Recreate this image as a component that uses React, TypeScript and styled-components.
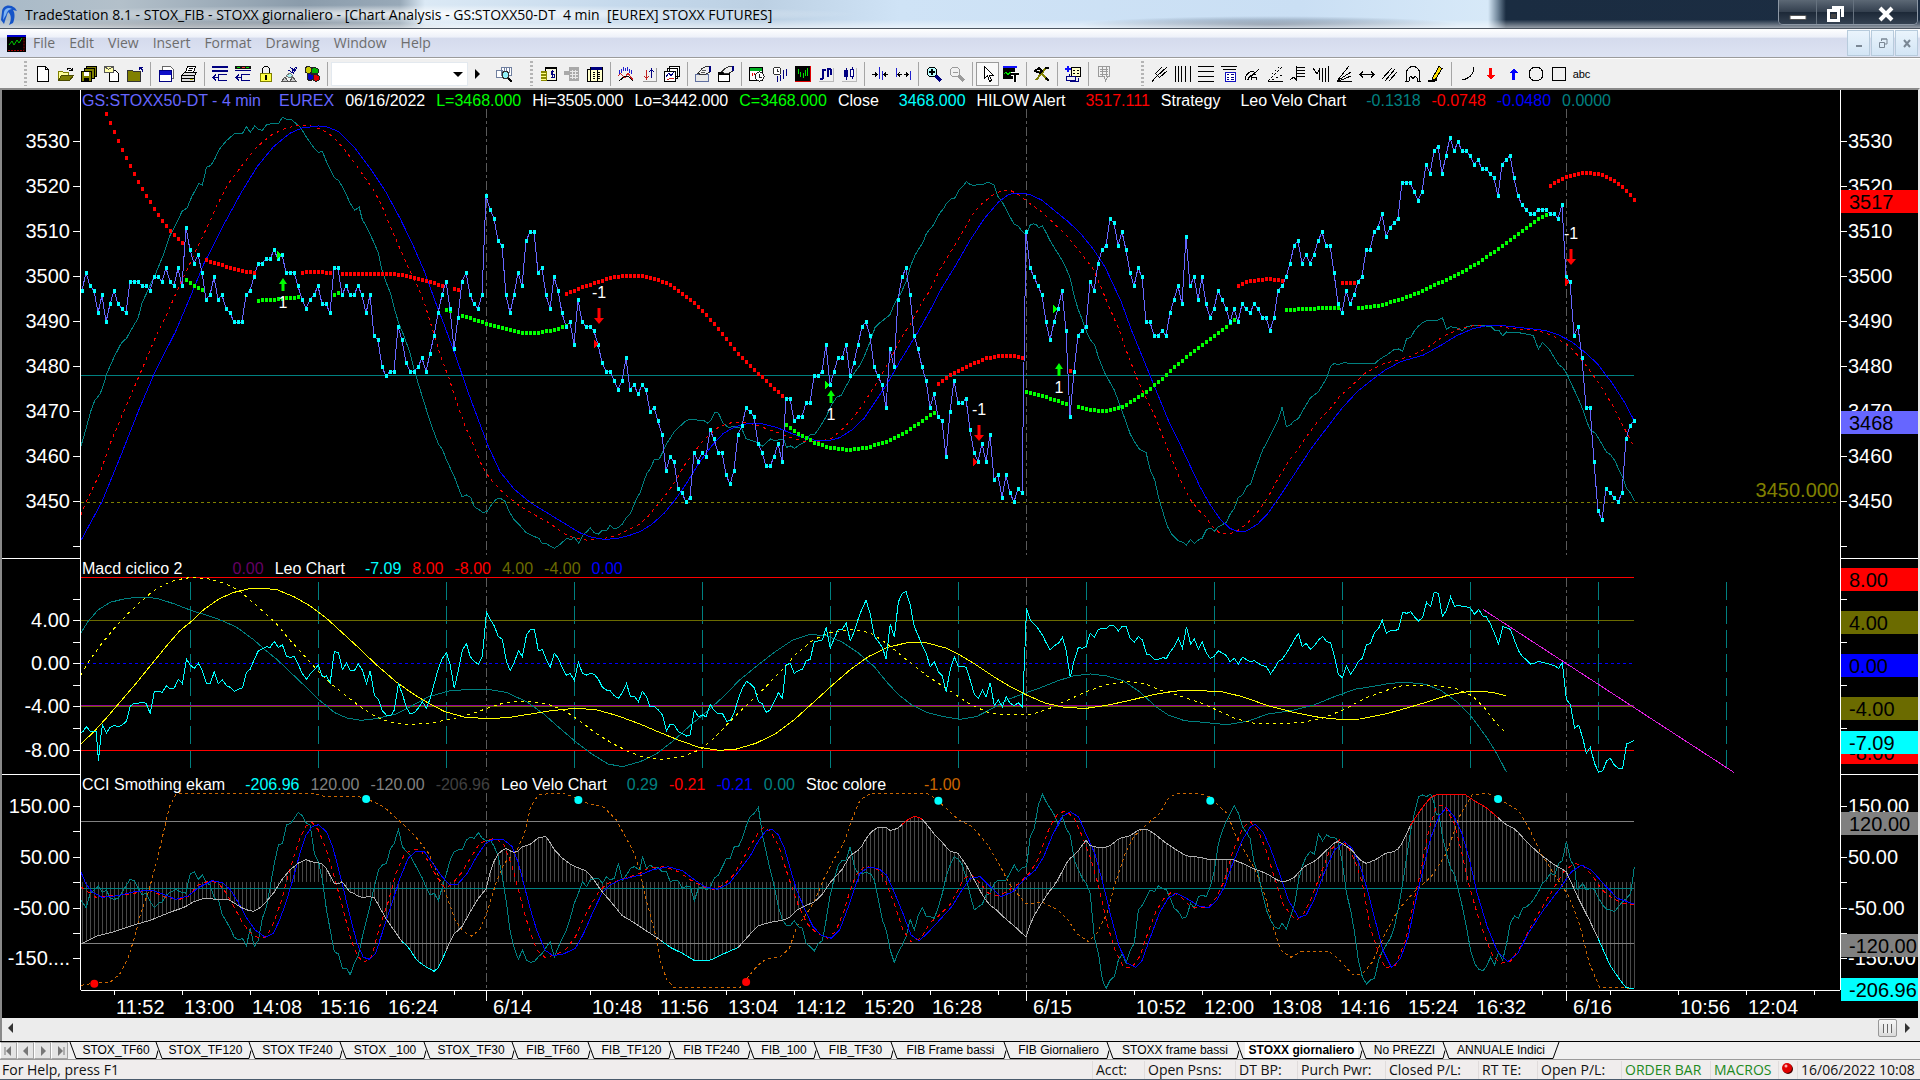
import React from "react";
import styled, { createGlobalStyle } from "styled-components";

const Global = createGlobalStyle`
  html, body { margin: 0; background: #f0f0f0; }
  body { font-family: "Open Sans", "Noto Sans", sans-serif; }
  * { box-sizing: border-box; }
  button, input { font: inherit; color: inherit; }
`;

/* ------------------------------------------------------------------ */
/* Series data                                                         */
/* ------------------------------------------------------------------ */

const PRICES = `
3497 3501 3498 3497 3492 3496 3490 3494 3497 3494 3493 3492 3499 3499 3499 3498 3498 3497 3500 3500
3499 3502 3499 3498 3502 3498 3511 3506 3503 3505 3501 3495 3496 3500 3495 3496 3493 3492 3490 3490
3490 3496 3497 3500 3503 3503 3504 3504 3506 3504 3505 3501 3501 3501 3498 3495 3493 3495 3496 3498
3494 3494 3492 3502 3502 3496 3498 3496 3496 3498 3496 3492 3496 3487 3486 3480 3478 3479 3479 3489
3486 3481 3479 3479 3480 3482 3479 3483 3487 3492 3496 3499 3493 3484 3491 3499 3501 3496 3494 3493
3496 3518 3515 3513 3508 3507 3496 3492 3496 3501 3498 3508 3510 3510 3501 3502 3496 3493 3500 3497
3492 3489 3490 3485 3495 3490 3489 3489 3488 3485 3481 3479 3479 3477 3475 3477 3482 3475 3476 3474
3476 3475 3470 3471 3468 3465 3457 3460 3459 3453 3452 3450 3451 3461 3459 3461 3460 3466 3464 3461
3461 3456 3454 3457 3465 3467 3471 3470 3469 3463 3461 3458 3458 3460 3463 3459 3473 3473 3468 3469
3469 3472 3472 3478 3478 3479 3485 3476 3479 3482 3482 3485 3478 3481 3485 3489 3490 3487 3480 3478
3476 3471 3484 3480 3495 3500 3502 3496 3487 3484 3480 3477 3471 3474 3469 3468 3460 3470 3477 3472
3472 3473 3466 3461 3459 3463 3459 3465 3455 3456 3451 3456 3452 3450 3453 3452 3510 3502 3500 3498
3496 3490 3486 3490 3493 3497 3488 3469 3479 3487 3488 3489 3499 3497 3503 3506 3507 3513 3512 3507
3510 3506 3501 3498 3502 3500 3490 3490 3487 3487 3488 3487 3492 3495 3498 3494 3509 3498 3500 3495
3500 3494 3491 3493 3497 3495 3493 3490 3493 3490 3494 3493 3492 3494 3493 3491 3491 3488 3491 3497
3498 3500 3503 3507 3508 3503 3505 3503 3505 3508 3510 3507 3507 3501 3494 3492 3497 3494 3496 3499
3500 3506 3506 3510 3511 3514 3509 3511 3512 3513 3521 3521 3521 3519 3517 3519 3525 3523 3528 3529
3523 3527 3531 3528 3530 3528 3528 3527 3525 3526 3524 3524 3523 3522 3518 3525 3526 3527 3522 3518
3516 3515 3514 3514 3515 3515 3515 3514 3514 3513 3516 3500 3499 3487 3489 3482 3471 3471 3459 3448
3446 3453 3452 3451 3450 3452 3464 3467 3468`
  .trim().split(/\s+/).map(Number);

type Point = [number, number];
type Sheet = { x: number; step: number; y: number };

// Indicator samples are stored per sheet; each sheet has its own origin and resolution.
const U1: Sheet = { x: 0, step: 2.45, y: 90 };
const U2: Sheet = { x: 560, step: 2.45, y: 90 };
const U3: Sheet = { x: 1120, step: 1.96, y: 90 };
const L1: Sheet = { x: 0, step: 2.45, y: 550 };
const L2: Sheet = { x: 560, step: 2.45, y: 550 };
const L3: Sheet = { x: 1120, step: 1.96, y: 550 };

const read = (s: Sheet, data: string): Point[] => {
  const n = data.trim().split(/[\s,]+/).map(Number);
  const out: Point[] = [];
  for (let i = 0; i < n.length; i += 2) out.push([s.x + n[i] / s.step, s.y + n[i + 1] / 3]);
  return out;
};

const VELO = [
  ...read(U1, `198,1070 210,1020 222,965 232,932 245,912 252,890 262,850 280,800 297,760 310,745 325,712 338,685 348,640 370,580 380,555 400,495 415,440 430,405 447,362 458,355 470,320 487,281 496,285 506,232 517,226 527,205 537,178 555,152 574,131 594,131 604,110 613,127 624,108 633,118 643,121 653,104 672,100 683,99 692,82 702,88 712,87 725,100 738,115 750,140 768,172 780,187 790,184 800,215 819,263 830,272 842,297 858,340 869,361 880,352 888,390 898,410 917,460 927,490 935,535 947,580 957,610 967,660 977,700 987,730 1005,790 1015,840 1027,890 1045,960 1055,1000 1074,1062 1084,1078 1094,1110 1113,1160 1132,1221 1143,1215 1153,1222 1162,1250 1172,1258 1184,1268 1194,1264 1204,1245 1215,1228 1225,1224 1237,1234 1248,1266 1260,1290 1275,1308 1289,1328 1310,1340 1320,1345 1328,1360 1340,1362 1358,1375 1370,1365 1388,1346 1400,1348 1407,1342 1418,1360 1430,1332 1438,1325 1446,1313 1456,1328 1466,1332 1476,1320 1486,1322 1495,1306 1505,1317 1515,1312 1525,1302 1535,1282 1545,1270 1560,1225 1568,1208`),
  ...read(U2, `205,1175 213,1150 222,1135 231,1108 243,1107 252,1085 262,1060 280,1025 300,1002 310,991 325,988 335,990 350,990 362,1000 370,990 380,966 388,970 400,1000 412,1012 425,1010 445,1015 456,1046 470,1052 480,1055 496,1069 505,1058 516,1047 527,1052 540,1048 548,1048 555,1072 565,1068 575,1075 585,1066 600,1055 612,1035 625,1032 640,1005 652,980 665,945 678,922 690,915 700,890 712,865 735,825 745,800 760,755 772,712 785,697 808,675 820,640 835,610 848,575 860,525 870,495 880,475 890,455 898,430 915,405 930,370 940,355 946,342 958,327 967,324 978,300 988,287 996,275 1003,282 1015,287 1023,283 1035,284 1047,277 1055,280 1063,285 1072,318 1085,340 1098,370 1112,402 1122,408 1133,425 1143,435 1152,405 1160,401 1168,405 1172,413 1182,407 1192,430 1202,455 1212,475 1230,510 1240,535 1250,565 1260,620 1270,660 1280,690 1290,725 1300,750 1310,765 1320,805 1335,850 1348,878 1358,900 1370,940 1385,990 1397,1032 1410,1060 1420,1078 1436,1088 1446,1140 1457,1170 1467,1225 1478,1270 1488,1308 1497,1330 1515,1352 1528,1358 1535,1365 1545,1348 1554,1360 1568,1347`),
  ...read(U3, `161,1345 169,1320 177,1314 185,1323 193,1310 208,1298 216,1272 224,1255 232,1222 240,1215 248,1190 256,1182 265,1140 280,1078 287,1060 298,1025 310,990 318,950 326,1010 334,1005 342,992 350,985 357,965 365,945 373,924 389,905 397,885 405,865 413,828 420,820 428,824 440,817 452,822 465,820 480,822 490,819 499,821 507,810 515,802 525,793 538,778 546,777 554,784 562,745 570,743 577,722 585,708 593,698 601,692 609,691 616,692 624,690 632,683 640,718 648,710 660,713 671,722 680,710 690,707 700,706 710,705 718,708 726,708 734,720 742,720 750,737 758,726 768,728 780,727 790,731 800,733 810,737 820,778 828,757 840,775 850,800 860,824 868,833 876,852 884,880 892,905 900,933 908,962 915,995 922,1020 932,1030 942,1055 953,1085 962,1095 970,1112 978,1140 986,1165 993,1195 1000,1208 1008,1232`),
];

const VELO_FAST = [
  ...read(U1, `198,1275 215,1225 245,1150 270,1060 310,945 340,860 380,745 410,670 440,585 460,535 486,465 510,405 530,350 560,280 600,215 630,170 665,135 695,117 725,107 755,106 780,115 805,130 825,152 845,180 880,238 915,300 935,345 960,420 985,490 1005,545 1020,580 1040,640 1060,720 1080,800 1100,865 1120,940 1140,1010 1160,1065 1180,1125 1200,1165 1230,1205 1270,1245 1310,1275 1350,1302 1380,1330 1410,1345 1440,1351 1480,1345 1510,1338 1535,1322 1568,1302`),
  ...read(U2, `215,1280 235,1250 265,1205 285,1170 305,1125 330,1085 345,1060 370,1030 390,1010 420,998 440,997 465,1000 485,1007 515,1020 545,1033 570,1045 600,1055 635,1055 665,1045 690,1020 715,988 740,948 765,900 790,850 815,795 835,745 860,700 885,640 905,605 930,540 960,480 985,430 1010,375 1030,345 1060,315 1080,303 1105,302 1125,315 1150,340 1180,365 1210,400 1240,435 1270,480 1305,535 1325,590 1345,650 1370,720 1390,790 1415,870 1440,935 1460,985 1475,1035 1495,1095 1520,1170 1545,1230 1568,1265`),
  ...read(U3, `165,1275 180,1308 195,1328 210,1333 228,1325 250,1300 270,1265 290,1222 310,1165 330,1115 350,1075 370,1030 390,990 410,960 430,920 450,893 480,850 515,822 545,810 570,798 600,775 635,738 665,717 690,708 720,706 745,708 760,714 790,718 820,722 850,738 880,768 900,800 925,850 945,895 965,945 985,1005 1007,1068`),
];

const VELO_SLOW = [
  ...read(U1, `198,1352 250,1235 300,1085 340,960 380,845 430,725 470,610 500,520 550,400 590,310 630,230 670,170 710,130 740,114 780,108 800,110 830,125 870,175 910,240 945,305 980,385 1010,460 1040,545 1065,630 1090,710 1120,810 1145,900 1175,1000 1195,1065 1225,1145 1260,1198 1300,1238 1340,1268 1380,1298 1420,1328 1450,1342 1480,1348 1510,1346 1540,1337 1568,1325`),
  ...read(U2, `225,1303 255,1270 285,1225 310,1180 340,1120 370,1070 400,1030 430,1010 465,999 495,1001 530,1012 560,1027 595,1043 630,1052 655,1053 685,1043 715,1020 745,985 775,930 800,885 835,810 875,730 905,665 935,595 970,525 1005,450 1040,385 1075,335 1100,313 1120,309 1150,313 1180,330 1215,365 1245,395 1275,430 1305,475 1335,530 1375,635 1400,720 1430,810 1460,900 1490,990 1520,1065 1545,1130 1568,1190`),
  ...read(U3, `175,1240 195,1285 215,1315 230,1324 248,1323 270,1302 290,1270 315,1215 345,1145 375,1075 405,1015 435,955 465,905 495,868 520,840 550,815 595,795 630,765 660,737 690,717 715,708 745,706 775,711 805,716 835,722 860,735 885,755 910,785 935,820 965,880 990,940 1007,990`),
];

const HIGH_STOPS = [
  read(U1, "261,75 280,128 300,183 329,254 349,300 378,358 407,410 427,437 447,461"),
  read(U1, "506,511 540,525 574,537 600,545 625,549"),
  read(U1, "741,548 775,545 809,549"),
  read(U1, "839,551 950,551 990,556 1035,570 1084,588"),
  read(U1, "1113,597 1123,600"),
  [...read(U1, "1388,611 1430,590 1466,575 1505,561 1540,557 1568,557"), ...read(U2, "225,565 262,580 290,603 320,630 360,678 400,735 440,798 480,845 510,880 545,918")],
  read(U2, "927,880 960,852 1000,828 1040,806 1080,797 1110,798 1133,804"),
  read(U2, "1248,842 1252,842"),
  read(U3, "232,588 250,575 287,567 318,572"),
  read(U3, "436,578 462,578"),
  read(U3, "844,286 875,259 899,251 920,248 945,255 970,275 990,300 1008,330"),
];

const LOW_STOPS = [
  read(U1, "457,572 476,590 497,600"),
  read(U1, "633,632 680,628 733,621"),
  read(U1, "819,615 829,610"),
  read(U1, "1094,660 1103,662"),
  read(U1, "1133,678 1180,697 1220,712 1270,727 1305,730 1340,724 1388,709"),
  read(U2, "554,1005 584,1032 623,1058 662,1074 711,1080 750,1073 799,1055 848,1025 888,992 917,967"),
  read(U2, "1143,906 1190,922 1240,942"),
  [...read(U2, "1270,950 1310,962 1340,962 1378,950 1407,930 1437,905 1476,865 1515,820 1568,770"), ...read(U3, "190,730 216,700 224,690")],
  read(U3, "326,659 365,658 397,653 430,653"),
  read(U3, "467,654 507,647 546,630 585,607 624,580 663,552 702,518 742,475 781,430 812,394 836,375"),
];

const MACD = [
  ...read(L1, `198,548 203,545 211,530 221,543 231,543 236,545 241,632 247,560 251,525 261,548 270,532 280,526 290,530 300,524 310,514 319,468 329,460 339,460 345,457 358,460 368,490 378,426 388,424 398,427 407,407 417,416 427,414 437,388 447,401 457,328 466,345 476,355 486,340 496,362 506,401 515,401 525,365 535,401 545,390 555,407 564,412 574,424 584,418 594,414 604,367 613,358 623,328 633,302 643,296 653,290 662,292 672,274 682,293 692,284 702,320 712,322 721,319 731,345 741,371 751,388 760,372 770,360 780,345 790,380 800,378 809,398 819,305 829,307 839,358 849,340 858,360 868,362 878,342 888,360 898,401 907,362 917,435 927,448 937,482 947,496 957,498 966,480 976,401 986,432 996,474 1005,491 1015,488 1025,474 1035,455 1045,475 1054,445 1064,400 1074,355 1084,325 1094,308 1103,345 1113,415 1123,360 1133,300 1143,281 1152,320 1162,334 1172,343 1182,318 1187,250 1192,187 1202,210 1211,228 1221,260 1231,268 1241,335 1250,362 1260,337 1270,302 1280,320 1290,255 1300,238 1309,238 1319,302 1329,299 1339,330 1348,352 1358,310 1368,325 1378,355 1388,376 1397,370 1407,391 1417,337 1427,370 1437,375 1446,370 1456,373 1466,388 1476,412 1486,420 1495,422 1505,437 1515,445 1525,428 1535,401 1545,440 1554,439 1564,455`),
  ...read(L2, `202,424 212,440 221,471 231,470 241,480 251,495 261,543 270,523 280,525 290,545 300,551 310,558 319,555 329,481 339,500 349,495 358,500 368,463 378,482 388,492 398,490 408,514 417,512 427,487 437,445 447,415 457,394 466,401 476,413 486,455 496,462 505,487 515,480 525,455 535,428 545,445 554,345 564,340 574,370 584,362 594,358 603,333 613,328 623,275 633,273 643,270 652,232 662,295 672,265 682,238 692,238 701,218 711,272 721,245 731,205 741,174 750,151 760,192 770,258 780,275 790,292 799,328 809,222 819,260 829,155 839,130 848,125 858,165 868,230 878,258 888,287 897,310 907,350 917,335 927,365 937,378 946,425 956,360 966,320 976,350 986,348 995,352 1005,390 1015,432 1025,445 1035,420 1044,440 1054,398 1064,467 1074,450 1084,470 1093,440 1103,460 1113,467 1123,458 1133,470 1138,330 1143,175 1152,210 1162,222 1172,237 1182,255 1191,278 1201,300 1211,287 1221,280 1231,262 1240,300 1250,382 1260,330 1270,292 1280,295 1289,290 1299,250 1309,262 1319,238 1329,236 1338,237 1348,225 1358,228 1368,243 1378,228 1387,228 1397,265 1407,277 1417,260 1427,270 1437,312 1446,315 1456,328 1466,328 1476,323 1486,325 1495,305 1505,290 1515,265 1525,295 1535,230 1545,282 1554,268 1564,297`),
  ...read(L3, `161,275 169,308 177,326 185,318 193,302 201,310 208,316 216,335 224,325 232,342 240,322 255,335 263,332 279,347 287,350 295,371 303,355 310,335 318,328 326,310 334,290 342,268 350,250 357,290 365,280 373,298 381,287 389,270 397,259 405,275 413,278 420,318 428,373 436,383 444,348 452,373 460,355 467,335 475,325 483,285 491,280 499,247 507,235 514,210 522,250 530,242 538,243 546,237 554,187 562,190 570,185 577,200 585,213 593,202 601,157 609,170 616,127 624,130 632,200 640,180 648,140 656,170 663,165 671,170 679,170 687,175 695,193 703,178 711,198 718,200 726,222 734,250 742,282 750,230 758,234 765,238 773,270 781,302 789,320 797,330 805,342 812,340 820,334 828,337 836,340 844,343 852,348 860,355 867,337 875,448 883,465 891,535 899,525 907,565 914,610 922,592 930,640 938,667 946,662 954,632 961,625 969,645 977,655 985,655 993,582 1001,577 1008,570`),
];

const CYCLE_MAIN = [
  ...read(L1, `198,582 230,545 260,505 290,462 330,405 370,345 410,285 440,243 470,213 500,178 535,148 570,128 610,116 650,115 680,120 720,140 760,168 800,205 840,250 880,295 920,342 970,395 1010,430 1050,460 1090,485 1140,502 1200,506 1250,502 1300,492 1350,482 1410,475 1460,479 1510,496 1568,522`),
  ...read(L2, `240,545 290,570 340,592 390,601 430,598 480,580 530,550 575,508 620,458 665,408 710,360 755,320 800,293 850,278 900,279 945,294 980,315 1020,345 1060,378 1100,408 1143,435 1190,460 1240,473 1290,475 1340,466 1400,450 1450,435 1500,424 1540,421 1568,422`),
  ...read(L3, `200,425 240,440 290,467 340,487 390,502 430,508 470,507 520,492 560,475 600,457 640,437 670,427 700,424 730,427 757,437`),
];

const CYCLE_LEAD = [
  ...read(L1, `198,375 220,330 250,280 280,235 310,195 340,160 370,128 400,105 430,90 470,82 510,86 550,100 590,125 620,158 650,190 680,225 710,270 740,310 770,350 800,390 840,430 880,468 920,500 960,518 1010,524 1060,518 1110,506 1160,490 1200,472 1240,457 1290,454 1340,462 1380,480 1420,512 1460,550 1500,580 1540,605 1568,618`),
  ...read(L2, `250,629 300,620 345,598 380,562 420,510 460,462 500,415 540,365 580,310 620,270 660,248 710,238 760,248 800,280 850,330 900,378 950,418 1000,460 1050,488 1100,495 1160,492 1200,475 1240,452 1290,425 1340,403 1390,394 1430,400 1470,420 1520,438 1568,458`),
  ...read(L3, `190,480 225,505 260,519 310,521 360,517 400,503 440,478 480,445 520,422 550,408 590,405 625,407 660,417 690,437 715,475 735,515 757,550`),
];

const CYCLE_BASE = [
  ...read(L1, `198,250 215,215 240,180 270,157 310,145 350,142 385,145 430,163 470,182 510,197 545,212 580,232 620,268 650,300 680,330 710,365 740,400 780,448 820,488 850,504 885,511 920,506 970,492 1010,467 1050,440 1100,423 1150,418 1200,419 1240,427 1290,455 1330,490 1370,533 1410,575 1450,612 1490,642 1525,650 1568,635`),
  ...read(L2, `235,613 280,570 320,525 360,485 400,440 440,390 490,340 530,303 570,270 610,254 650,256 690,275 730,308 770,350 800,395 830,435 860,463 900,488 940,500 980,508 1020,500 1060,475 1100,447 1143,428 1180,412 1220,392 1260,377 1300,372 1340,378 1380,392 1420,425 1460,470 1490,495 1530,512 1568,516`),
  ...read(L3, `210,524 250,514 290,492 335,482 380,465 420,440 460,418 500,408 530,400 560,397 600,403 630,422 660,455 690,502 720,565 740,615 757,665`),
];

const CCI = [
  ...read(L1, `198,1182 215,1172 240,1157 280,1145 320,1128 370,1110 420,1085 450,1073 475,1055 500,1045 530,1048 560,1048 590,1072 610,1082 625,1084 645,1065 670,1030 690,990 710,960 730,940 750,928 765,937 785,938 800,955 812,985 820,1003 830,1002 839,994 850,1015 860,1030 870,1030 880,1042 915,1040 925,1060 945,1105 965,1140 985,1175 1000,1190 1020,1230 1040,1248 1065,1265 1076,1250 1090,1210 1110,1155 1132,1130 1150,1090 1172,1045 1192,1015 1202,960 1215,920 1225,905 1240,895 1257,908 1270,903 1280,890 1300,883 1320,862 1340,860 1355,895 1378,925 1400,945 1420,955 1440,965 1455,990 1475,1025 1500,1060 1525,1098 1550,1115 1568,1130`),
  ...read(L2, `240,1165 270,1192 300,1210 330,1232 370,1230 400,1212 437,1192 460,1160 485,1128 510,1118 540,1112 560,1105 580,1080 605,1065 625,1055 645,1030 660,1000 690,960 712,915 735,898 755,855 775,833 800,832 810,843 830,833 850,810 870,798 885,805 900,825 915,850 935,875 955,903 975,910 995,945 1015,990 1035,1035 1050,1062 1070,1080 1090,1105 1115,1130 1143,1163 1155,1110 1175,1070 1195,1030 1215,1000 1230,965 1245,930 1265,910 1289,870 1299,887 1320,893 1345,890 1370,865 1395,858 1420,838 1440,838 1460,855 1480,875 1510,900 1535,918 1568,922`),
  ...read(L3, `180,930 220,928 240,940 265,958 290,972 305,988 320,996 340,985 360,950 385,930 405,900 425,872 440,885 455,900 470,930 482,940 500,930 520,910 542,903 555,875 568,830 580,800 595,768 610,740 625,732 650,735 675,732 690,748 715,770 735,795 755,822 775,838 800,880 825,915 850,943 875,965 885,1000 900,1050 920,1110 940,1175 960,1245 980,1290 993,1315 1008,1314`),
];

const OSC = [
  ...read(L1, `198,1050 211,1073 221,1030 231,1020 241,1008 251,1027 261,1020 270,1045 280,1048 290,1045 300,1025 310,1005 319,988 329,992 339,1015 348,1035 358,1030 368,1055 378,1073 388,1060 398,1055 407,1035 420,1025 432,1018 440,1025 455,1030 466,972 476,966 486,988 496,975 506,998 515,1005 525,1045 535,1050 545,1095 555,1115 564,1135 574,1162 584,1170 594,1165 604,1187 613,1135 623,1190 633,1170 643,1105 653,1070 662,1010 672,940 682,885 692,880 702,825 712,820 721,805 731,787 741,798 751,820 760,825 770,910 780,935 790,990 800,1080 809,1140 819,1205 829,1212 839,1255 849,1255 858,1274 868,1240 878,1215 888,1160 898,1110 907,1065 917,1010 927,960 937,945 947,940 957,895 966,880 976,838 986,890 996,905 1005,915 1015,940 1025,962 1035,985 1045,1015 1054,1035 1064,1030 1074,1052 1084,1010 1094,970 1103,930 1113,905 1123,900 1133,898 1143,870 1152,862 1162,865 1172,848 1182,865 1192,872 1202,872 1211,890 1221,920 1231,980 1241,1060 1250,1145 1260,1195 1270,1228 1280,1200 1290,1230 1300,1237 1309,1235 1319,1220 1329,1210 1339,1190 1348,1175 1358,1222 1368,1190 1378,1165 1388,1140 1397,1105 1407,1060 1417,1030 1427,995 1437,1010 1446,990 1456,985 1466,985 1476,1000 1486,980 1495,990 1505,985 1515,940 1525,990 1535,975 1545,955 1554,950 1568,960`),
  ...read(L2, `202,920 212,955 221,945 231,955 241,953 251,965 261,965 270,995 280,990 290,993 300,1015 310,1008 319,1010 329,1052 339,1015 349,1010 358,1020 368,1012 378,985 388,975 398,950 408,925 417,925 427,890 437,890 447,865 457,825 466,800 476,790 486,772 496,855 505,905 515,960 525,1010 535,1070 545,1110 554,1125 564,1127 574,1112 584,1130 594,1135 603,1180 613,1190 623,1203 633,1180 643,1172 652,1110 662,1035 672,985 682,945 692,930 701,930 711,890 721,950 731,972 741,970 750,968 760,970 770,990 780,1050 790,1110 799,1140 809,1200 819,1237 829,1205 839,1185 848,1160 858,1108 868,1140 878,1095 888,1073 897,1098 907,1100 917,1105 927,1070 937,1030 946,980 956,945 966,920 976,928 986,945 995,985 1005,1035 1015,1080 1025,1070 1035,1062 1044,1035 1054,1030 1064,1000 1074,990 1084,993 1093,990 1103,968 1113,945 1123,965 1133,953 1143,950 1152,860 1162,835 1172,765 1182,733 1191,755 1201,775 1211,795 1221,825 1231,800 1240,835 1250,855 1260,930 1270,960 1280,985 1289,1000 1299,1030 1309,1160 1319,1210 1329,1290 1338,1315 1348,1290 1358,1280 1368,1230 1378,1212 1387,1240 1397,1200 1407,1180 1417,1080 1427,1065 1437,1040 1446,1020 1456,1025 1466,1008 1476,1015 1486,1020 1495,1045 1505,1075 1515,1085 1525,1105 1535,1100 1545,1060 1554,1075 1564,1040`),
  ...read(L3, `161,1035 169,1040 177,1010 185,960 193,880 201,840 208,815 216,790 224,767 232,790 240,830 255,865 263,940 271,970 279,1030 287,1080 295,1110 303,1130 311,1137 318,1120 326,1137 334,1100 342,1065 350,990 357,950 365,920 373,905 381,912 389,852 397,872 405,855 413,862 424,865 430,890 436,940 444,1030 452,1080 460,1150 467,1230 475,1280 483,1302 491,1290 499,1285 507,1230 514,1205 522,1185 530,1165 538,1130 546,1070 554,1000 562,920 570,840 577,790 585,740 593,735 601,740 609,732 616,760 620,795 625,790 632,860 640,910 648,955 656,975 663,1020 671,1070 679,1130 687,1200 695,1240 703,1258 711,1262 718,1250 726,1222 734,1245 742,1207 750,1230 758,1180 765,1120 773,1098 781,1105 789,1075 797,1070 805,1060 812,1045 820,1025 828,1000 836,988 844,970 852,975 860,940 867,932 875,875 883,930 891,950 896,1020 907,1000 914,1020 922,1015 930,1018 938,1045 946,1065 954,1078 961,1080 969,1085 977,1070 985,1055 993,1045 1001,1030 1008,952`),
];

const OSC_FAST = [
  ...read(L1, `198,1010 215,1025 235,1042 265,1038 300,1035 330,1030 360,1018 385,1030 410,1045 440,1048 460,1040 485,1005 515,992 535,1000 555,1030 575,1075 595,1120 615,1150 640,1168 655,1155 670,1120 690,1050 705,980 720,920 735,865 750,828 765,818 780,840 800,900 820,985 840,1075 860,1170 875,1215 890,1238 910,1222 930,1130 950,1060 970,970 990,915 1010,898 1030,900 1050,935 1070,980 1090,1015 1105,1005 1130,970 1150,930 1175,880 1195,870 1215,865 1235,885 1255,950 1270,1020 1285,1090 1300,1150 1315,1200 1335,1222 1360,1215 1385,1200 1410,1160 1430,1105 1450,1060 1470,1020 1490,1000 1520,990 1545,980 1568,970`),
  ...read(L2, `215,955 255,950 290,965 320,990 350,1010 375,1018 400,1005 425,975 445,935 465,890 485,850 500,830 515,845 535,885 550,945 565,1000 585,1070 605,1120 625,1145 655,1165 675,1145 695,1085 710,1025 725,975 745,950 770,952 785,965 800,1000 820,1065 840,1140 860,1175 885,1165 905,1120 930,1095 955,1065 975,1020 990,985 1010,975 1030,1000 1050,1030 1075,1038 1100,1020 1125,1000 1150,970 1170,930 1185,880 1200,830 1220,790 1240,783 1260,805 1280,860 1300,925 1320,1010 1340,1120 1360,1200 1380,1250 1400,1255 1420,1220 1440,1150 1460,1085 1480,1045 1500,1025 1525,1045 1545,1070 1568,1075`),
  ...read(L3, `175,1068 190,1040 205,990 220,910 240,835 255,815 270,840 285,895 300,970 320,1065 345,1112 360,1090 375,1045 390,985 410,905 430,870 445,885 460,930 475,1000 490,1130 505,1200 520,1255 540,1245 560,1170 575,1060 590,960 605,840 620,770 635,765 655,820 670,910 685,1010 700,1090 715,1160 730,1215 745,1240 765,1235 785,1190 805,1130 830,1065 850,1015 870,965 890,940 905,945 925,975 945,1020 965,1045 985,1060 1008,1065`),
];

const OSC_SLOW = [
  ...read(L1, `198,965 210,1000 225,1025 250,1042 290,1037 330,1025 370,1020 395,1030 430,1048 460,1038 490,1010 520,992 545,998 565,1020 585,1060 605,1105 625,1140 650,1162 670,1150 685,1110 700,1060 715,1000 735,910 750,855 765,830 780,824 800,845 815,890 830,960 845,1035 860,1110 875,1180 890,1222 905,1228 920,1210 940,1135 960,1060 980,985 1000,925 1020,903 1040,905 1060,940 1080,975 1100,1003 1120,1005 1145,970 1170,915 1190,880 1210,868 1235,870 1255,890 1270,940 1285,1010 1300,1080 1315,1140 1335,1200 1355,1217 1380,1212 1410,1195 1430,1150 1455,1080 1475,1030 1495,1005 1520,990 1568,975`),
  ...read(L2, `225,960 265,950 300,962 330,990 355,1010 385,1018 415,1000 440,960 465,920 485,875 505,842 520,838 535,855 550,895 565,960 580,1020 600,1080 620,1130 640,1155 665,1165 685,1140 705,1075 720,1020 735,970 755,952 780,955 800,975 820,1030 840,1090 860,1155 880,1172 900,1150 930,1110 960,1070 985,1020 1005,985 1030,980 1050,1005 1080,1040 1110,1025 1140,985 1165,960 1185,920 1205,860 1230,800 1250,785 1270,800 1290,855 1310,910 1330,1000 1350,1100 1370,1190 1390,1240 1410,1252 1425,1235 1450,1150 1470,1085 1490,1045 1510,1030 1535,1045 1568,1070`),
  ...read(L3, `175,1072 190,1050 205,1010 220,945 240,870 255,832 265,823 280,845 295,895 310,960 330,1050 350,1103 365,1095 380,1050 400,970 420,900 440,875 455,895 470,945 485,1020 500,1110 515,1200 532,1252 550,1225 565,1160 580,1050 595,950 610,860 625,800 640,772 655,800 670,850 685,930 700,1030 720,1130 740,1205 760,1235 780,1210 800,1150 830,1080 860,1020 885,965 905,945 925,962 950,1005 975,1045 1008,1062`),
];

const STOC = [
  ...read(L1, `198,1306 230,1300 270,1297 295,1270 315,1220 330,1160 345,1090 365,1020 385,930 400,850 415,770 430,735 440,730 770,730 790,738 880,740 900,747 940,770 985,820 1015,855 1050,910 1075,980 1095,1040 1115,1110 1135,1145 1155,1158 1175,1140 1195,1080 1215,1000 1235,940 1265,905 1285,850 1300,770 1320,733 1380,730 1405,740 1440,760 1480,772 1510,810 1530,855 1550,900 1568,960`),
  ...read(L2, `205,1020 220,1090 235,1160 245,1230 262,1290 280,1313 440,1314 465,1275 485,1245 505,1228 540,1220 562,1195 580,1130 605,1090 625,1050 645,990 670,930 695,880 715,810 735,750 760,731 900,731 925,750 950,780 975,808 1010,830 1045,880 1075,940 1100,1000 1140,1060 1185,1058 1220,1080 1245,1110 1265,1150 1295,1175 1315,1150 1340,1090 1360,1000 1385,910 1405,860 1440,820 1470,790 1490,745 1510,731 1568,731`),
  ...read(L3, `175,740 195,770 210,790 225,850 245,905 265,960 285,1040 300,1130 315,1200 335,1222 355,1205 410,1205 430,1230 455,1272 475,1272 495,1235 520,1150 545,1080 580,1020 610,980 640,910 665,800 690,735 720,730 740,745 780,780 800,830 825,910 850,970 880,1040 900,1120 920,1240 940,1312 1008,1315`),
];

const STOC_MARKS: { at: Point; color: string }[] = [
  { at: read(L1, "897,747")[0], color: "#00ffff" },
  { at: read(L1, "1417,750")[0], color: "#00ffff" },
  { at: read(L2, "927,752")[0], color: "#00ffff" },
  { at: read(L3, "177,752")[0], color: "#00ffff" },
  { at: read(L3, "741,747")[0], color: "#00ffff" },
  { at: read(L1, "231,1301")[0], color: "#ff0000" },
  { at: read(L2, "456,1296")[0], color: "#ff0000" },
];

/* ------------------------------------------------------------------ */
/* Chart geometry                                                      */
/* ------------------------------------------------------------------ */

const PLOT_LEFT = 81;
const FIRST_BAR = 82;
const BAR = 4;
const LAST_X = 1634;
const barX = (i: number) => FIRST_BAR + i * BAR;
const priceY = (p: number) => 142 + (3530 - p) * 4.5;
const priceDots: Point[] = PRICES.map((p, i) => [barX(i), priceY(p)]);

const line = (pts: Point[]) => "M" + pts.map(([x, y]) => `${x.toFixed(1)} ${y.toFixed(1)}`).join("L");

const valueAt = (pts: Point[], x: number) => {
  for (let i = 1; i < pts.length; i++) {
    const [x0, y0] = pts[i - 1];
    const [x1, y1] = pts[i];
    if (x <= x1) return y0 + ((y1 - y0) * (x - x0)) / (x1 - x0 || 1);
  }
  return pts[pts.length - 1][1];
};

const blocks = (segments: Point[][]) =>
  segments
    .map((seg) => {
      const from = Math.round((seg[0][0] - FIRST_BAR) / BAR);
      const to = Math.round((seg[seg.length - 1][0] - FIRST_BAR) / BAR);
      let d = "";
      for (let i = from; i <= to; i++) d += `M${barX(i) - 1} ${Math.round(valueAt(seg, barX(i))) - 2}h3v4h-3z`;
      return d;
    })
    .join("");

const CCI_BARS: Point[] = PRICES.map((_, i) => [barX(i), valueAt(CCI, barX(i))]);
const cciPath = (test: (y: number) => boolean) => {
  let d = "";
  for (let i = 1; i < CCI_BARS.length; i++) {
    const [x0, y0] = CCI_BARS[i - 1];
    const [x1, y1] = CCI_BARS[i];
    if (test(y1)) d += `M${x0} ${y0.toFixed(1)}L${x1} ${y1.toFixed(1)}`;
  }
  return d;
};

const SESSIONS = [486, 1026, 1566];
const CYCLES = Array.from({ length: 13 }, (_, k) => 190 + k * 128);

const SANS = '"Liberation Sans", Arial, sans-serif';

/* ------------------------------------------------------------------ */
/* Layout                                                              */
/* ------------------------------------------------------------------ */

const Shell = styled.div`
  min-height: 100vh;
  display: flex;
  flex-direction: column;
  background: #f0f0f0;
  overflow: hidden;
`;

const TitleBar = styled.header`
  height: 29px;
  display: flex;
  align-items: stretch;
  justify-content: space-between;
  border-bottom: 1px solid #4c5560;
  background:
    linear-gradient(180deg, rgba(255, 255, 255, 0) 70%, rgba(255, 255, 255, 0.55) 100%),
    radial-gradient(ellipse 190px 9px at 1270px 25px, rgba(75, 90, 110, 0.7), transparent),
    radial-gradient(ellipse 420px 9px at 440px 14px, rgba(255, 255, 255, 0.85), rgba(255, 255, 255, 0)),
    radial-gradient(ellipse 260px 8px at 200px 27px, rgba(90, 98, 108, 0.7), transparent),
    linear-gradient(90deg, #a9bac8 0, #b3c0ca 120px, #8b9cab 300px, #98a9b8 400px, #dbe9f5 425px, #c5d9ec 620px,
      #bcd0e3 760px, #cfe3f6 900px, #cadff4 1300px, #d7e9f8 1488px, #6f8599 1498px, #1a2c41 1506px, #1c2d42 100%);
`;

const TitleText = styled.div`
  display: flex;
  align-items: center;
  gap: 7px;
  font-size: 14px;
  color: #000;
  white-space: pre;
`;

const WindowButtons = styled.div`
  display: flex;
  height: 25px;
  margin-right: 2px;
  border: 1px solid #8d98a5;
  border-top: 0;
  border-radius: 0 0 5px 5px;
  overflow: hidden;
`;

const WindowButton = styled.button<{ $wide?: boolean }>`
  width: ${(p) => (p.$wide ? "64px" : "37px")};
  padding: 4px 0 0;
  border: 0;
  border-left: 1px solid #66727f;
  background: linear-gradient(180deg, #5c6875 0%, #333f4e 50%, #1d2938 52%, #344151 100%);
  display: flex;
  align-items: center;
  justify-content: center;
  &:first-child { border-left: 0; }
`;

const MenuBar = styled.nav`
  height: 29px;
  display: flex;
  align-items: center;
  padding-left: 7px;
  border-bottom: 1px solid #9b9b9b;
  background: linear-gradient(180deg, #ffffff 0%, #eef1f9 28%, #d5dbed 34%, #dde3f3 100%);
`;

const MenuItem = styled.button`
  padding: 0 7px;
  border: 0;
  background: none;
  color: #6d6d6d;
  font-size: 14px;
  line-height: 24px;
`;

const ChildButtons = styled.div`
  margin-left: auto;
  display: flex;
  gap: 1px;
  padding-right: 2px;
`;

const ChildButton = styled.button`
  width: 23px;
  height: 26px;
  padding: 0;
  display: flex;
  align-items: center;
  justify-content: center;
  border: 1px solid #b7cbdc;
  background: linear-gradient(180deg, #eaf4fc, #d3e5f5);
`;

const Toolbar = styled.div`
  height: 30px;
  display: flex;
  align-items: center;
  padding-left: 24px;
  border-top: 1px solid #fff;
  background: #f0f0f0;
`;

const Grip = styled.div<{ $lead?: number }>`
  width: 3px;
  height: 25px;
  margin-left: ${(p) => p.$lead ?? 0}px;
  margin-right: 4px;
  background: repeating-linear-gradient(180deg, #b4b4b4 0 2px, #f0f0f0 2px 4px);
`;

const ToolButton = styled.button<{ $pressed?: boolean }>`
  width: 23px;
  height: 24px;
  padding: 0;
  display: flex;
  align-items: center;
  justify-content: center;
  border: 1px solid ${(p) => (p.$pressed ? "#9a9a9a" : "transparent")};
  background: ${(p) => (p.$pressed ? "#f8f8f8" : "none")};
  font-family: ${SANS};
  font-size: 11px;
  color: #000;
`;

const Separator = styled.div`
  width: 8px;
  height: 24px;
  display: flex;
  justify-content: center;
  &::before { content: ""; width: 1px; background: #a5a5a5; }
`;

const ComboBox = styled.label`
  display: flex;
  align-items: center;
  width: 137px;
  height: 24px;
  border: 1px solid #e3e9ef;
  background: #fff;
  padding-right: 4px;
`;

const ComboInput = styled.input`
  flex: 1;
  min-width: 0;
  border: 0;
  outline: 0;
  background: transparent;
  font-size: 12px;
`;

const Narrow = styled(ToolButton)`
  width: 18px;
`;

const Space = styled.div`
  width: 6px;
`;

const ChartFrame = styled.main`
  display: grid;
  grid-template-columns: 79px minmax(0, 1fr) 78px;
  border: 2px solid #8a8a8a;
  border-right-color: #e6e6e6;
  border-bottom: 0;
  background: #000;
  color: #fff;
  font-family: ${SANS};
`;

const AxisColumn = styled.svg`
  display: block;
  width: 100%;
  height: 928px;
  overflow: hidden;
  font-size: 20px;
  font-family: ${SANS};
`;

const Panes = styled.div`
  display: flex;
  flex-direction: column;
  min-width: 0;
`;

const Legend = styled.div`
  height: 19px;
  display: flex;
  padding-left: 1px;
  font-size: 16px;
  line-height: 22px;
  white-space: pre;
`;

const LegendItem = styled.span<{ $color: string; $gap: number }>`
  color: ${(p) => p.$color};
  margin-right: ${(p) => p.$gap}px;
`;

const Plot = styled.svg<{ $height: number }>`
  display: block;
  width: 100%;
  height: ${(p) => p.$height}px;
  overflow: hidden;
  font-size: 16px;
  font-family: ${SANS};
`;

const TimeAxis = styled.svg`
  display: block;
  width: 100%;
  height: 28px;
  font-size: 20px;
  font-family: ${SANS};
`;

const ScrollBar = styled.div`
  height: 23px;
  display: flex;
  align-items: flex-start;
  justify-content: space-between;
  padding: 0 5px 0 1px;
  border-left: 2px solid #8a8a8a;
  background: #ececec;
`;

const ScrollButton = styled.button`
  width: 16px;
  height: 20px;
  padding: 0;
  border: 0;
  background: none;
  display: flex;
  align-items: center;
  justify-content: center;
`;

const ScrollEnd = styled.div`
  display: flex;
  align-items: center;
  gap: 2px;
`;

const Thumb = styled.div`
  width: 19px;
  height: 18px;
  border: 1px solid #979797;
  border-radius: 2px;
  background: repeating-linear-gradient(90deg, #666 0 1px, #eee 1px 4px) center / 9px 9px no-repeat, linear-gradient(180deg, #f6f6f6, #dadada);
`;

const TabStrip = styled.div`
  height: 18px;
  display: flex;
  border-top: 1px solid #000;
  background: #f0f0f0;
  font-family: ${SANS};
  font-size: 12px;
`;

const TabNav = styled.button`
  width: 17px;
  height: 17px;
  padding: 0;
  border: 1px solid #a5a5a5;
  border-left-color: #fff;
  background: #e4e4e4;
  display: flex;
  align-items: center;
  justify-content: center;
`;

const Tab = styled.button<{ $active?: boolean; $width: number }>`
  width: ${(p) => p.$width}px;
  padding: 0;
  border: 0;
  border-bottom: 1px solid #000;
  background: ${(p) => (p.$active ? "#fff" : "none")};
  font-weight: ${(p) => (p.$active ? 700 : 400)};
  line-height: 16px;
  color: #000;
  white-space: nowrap;
  overflow: visible;
`;

const StatusBar = styled.footer`
  height: 21px;
  display: flex;
  align-items: flex-end;
  border-top: 1px solid #9a9a9a;
  border-bottom: 1px solid #4a5a6c;
  background: #f0eded;
  color: #111;
  font-size: 14px;
  line-height: 18px;
  white-space: nowrap;
`;

const HelpText = styled.div`
  flex: 1;
  padding-left: 2px;
`;

const StatusCell = styled.div<{ $width: number; $color?: string }>`
  width: ${(p) => p.$width}px;
  padding-left: 3px;
  border-left: 1px solid #e0dcdc;
  color: ${(p) => p.$color ?? "inherit"};
`;

/* ------------------------------------------------------------------ */
/* Icons                                                               */
/* ------------------------------------------------------------------ */

type Stroke = { d: string; s?: string; f?: string; w?: number };
const Glyph = ({ parts }: { parts: Stroke[] }) => (
  <svg width="16" height="16" viewBox="0 0 16 16" shapeRendering="crispEdges" aria-hidden="true">
    {parts.map((p, i) => (
      <path key={i} d={p.d} stroke={p.s ?? (p.f ? "none" : "#000")} fill={p.f ?? "none"} strokeWidth={p.w ?? 1} />
    ))}
  </svg>
);

const NAVY = "#000080";
const OLIVE = "#808000";
const GREY = "#9a9a9a";

const ICONS: Record<string, Stroke[]> = {
  new: [{ d: "M2.5 .5h8l3 3v12h-11zM10.5 .5v3h3", f: "#fff", s: "#000" }],
  open: [{ d: "M.5 14.500v-9h4l1 1h5v3", f: "#ffff99", s: OLIVE }, { d: "M.5 14.500l3-5h12l-4 5z", f: OLIVE, s: "#4a4a00" }, { d: "M9 3.500c2-2 4-1 5 1m0-3v3h-3" }],
  saveAll: [{ d: "M5.5 .5h10v10h-10z", f: OLIVE, s: "#000" }, { d: "M3.5 2.500h10v10h-10z", f: OLIVE, s: "#000" }, { d: "M.5 5.500h10v10h-10z", f: OLIVE, s: "#000" }, { d: "M3 6h5v4H3z", f: "#fff" }, { d: "M3 12h5v3H3z", f: "#000" }],
  mail: [{ d: "M5.5 4.500h6l3 3v8h-9z", f: "#fff", s: "#000" }, { d: "M.5.5h9v6h-9z", f: "#ffffaa", s: "#555" }, { d: "M.5.5l4 3 5-3", s: "#555" }],
  folderUp: [{ d: "M.5 4.500h5l1 1h7v10h-13z", f: OLIVE, s: "#333" }, { d: "M15.500 6v-2l-3-3m0 3v-3h3", s: NAVY }],
  window: [{ d: "M4.5.5h8l3 3v9h-11z", f: "#fff", s: "#666" }, { d: "M1.5 4.500h12v11h-12z", f: "#fff", s: NAVY }, { d: "M2 5h11v4H2z", f: "#1010c8" }],
  print: [{ d: "M4.5 6.500l2-6h8l-2 6", f: "#fff", s: "#000" }, { d: "M.5 9.500l3-3h12l-2 3v6h-13z", f: "#ddd", s: "#000" }, { d: "M.5 9.500h13M.5 12.500h13M8 2.500h4M7 4.500h4" }, { d: "M9 13h3v1H9z", f: "#cccc00" }],
  list: [{ d: "M0 1h16M0 4.500h16", s: NAVY, w: 2 }, { d: "M15 8.500h-9v6h9M6 11.500H1l3-3m-3 3l3 3", s: NAVY }],
  listColor: [{ d: "M0 4.500h16", s: NAVY }, { d: "M0 0h16v3H0z", f: "#111" }, { d: "M2 1h3v1H2zM11 1h3v1h-3z", f: "#00e000" }, { d: "M7 1h3v1H7z", f: "#ff3030" }, { d: "M15 8.500h-9v6h9M6 11.500H1l3-3m-3 3l3 3", s: NAVY }],
  lock: [{ d: "M4.5 7V3.500a3.500 3 0 0 1 7 0V7" }, { d: "M2.500 7.500h11v8h-11z", f: "#ffff44", s: OLIVE }, { d: "M7 9h2v2l.5 3h-3l.5-3z", f: "#000" }],
  net: [{ d: "M9 1l5 4M7 4l5 3M10 7l5-6M12 8l4-7", s: NAVY }, { d: "M1 15l3-4 3 4zM9 15l3-4 3 4z", s: "#555", f: "#ccc" }, { d: "M5 10l4-3 3 3-3 2z", s: "#777", f: "#a8f0f0" }],
  cubes: [{ d: "M1 2l3-2 4 2v4L5 8 1 6z", f: "#c8c800", s: "#222" }, { d: "M7 3l3-2 4 2v4l-4 1-3-1z", f: "#00b000", s: "#222" }, { d: "M3 8l3-1 3 2v4l-3 2-3-2z", f: "#0000c0", s: "#222" }, { d: "M9 9l3-1 3 2v4l-3 1.500-3-1.500z", f: "#e00000", s: "#222" }],
  search: [{ d: "M.5 4.500h6v7h-6zM5.500 1.500h10v8h-10z", f: "#fff", s: "#7080a0" }, { d: "M8.500 2v5M10.500 2v5M13.500 2v5", s: "#7080a0" }, { d: "M12 12l3.500 3.500", w: 2 }, { d: "M6 9a3.500 3.500 0 1 0 7 0a3.500 3.500 0 1 0-7 0", f: "#90f0f8", s: "#333" }],
  money: [{ d: "M4.500 1.500h11v13h-11z", f: "#f7f7e0", s: "#000" }, { d: "M5 1h10v2H5z", f: "#000" }, { d: "M13 5.500h-3v2.500h3V11h-3.500M11.500 4v8", s: NAVY }, { d: "M0 5h6v10H0z", f: "#8a8a00" }, { d: "M0 7.500h5M0 10.500h5M0 13.500h5", s: "#ffff80" }],
  greyTable: [{ d: "M5 1h10v14H5zM0 5h6v4H0z", f: "#a8a8a8" }, { d: "M8.500 4v9M11.500 4v9M6 5.500h8M6 8.500h8M6 11.500h8", s: "#e8e8e8" }],
  table: [{ d: "M.5 3.500h10v12h-10zM3.500 1.500h12v14h-12z", f: "#ffffcc", s: "#000" }, { d: "M4 1h11v3H4z", f: "#000080" }, { d: "M6 6.500h2M10 6.500h3M6 8.500h2M10 8.500h3M6 10.500h2M10 10.500h3M6 12.500h2M10 12.500h3" }],
  waves: [{ d: "M1.500 4v5M3.500 3v4M5.500 1v4M7.500 2v3M9.500 1v4M11.500 3v4M13.500 4v4", s: "#2020d0" }, { d: "M0 10c2-3 3-3 5 0s2 3 3 0 3-3 4 0l3 4", s: "#d02020" }, { d: "M1 15l6-5 4 1 4 4" }],
  arrows: [{ d: "M5.500 4v9m-2-3l2 3 2-3", s: "#c02020" }, { d: "M10.500 12V3m-2 3l2-3 2 3", s: NAVY }, { d: "M2 15.500h13V2", s: GREY }],
  stack: [{ d: "M5.500.5h10v10h-10zM3.500 2.500h10v10h-10z", f: "#fff", s: "#000" }, { d: "M.5 5.500h11v10h-11z", f: "#fff", s: "#000" }, { d: "M2 11l3-4 2 3 3-4", s: NAVY }, { d: "M3 14l4-2 3 1", s: "#d02020" }],
  hand: [{ d: "M.5 8.500h13v7h-13z", f: "#e8e8e8", s: "#6070a0" }, { d: "M3 7.500l4-5 4-2h3v6l-4 2H6z", f: "#eee", s: "#333" }, { d: "M14 0h2v6h-2z", f: NAVY }, { d: "M7 4l4 1M6 6l4 1", s: "#555" }],
  handPage: [{ d: "M.5 6.500h11v9h-11z", f: "#fff", s: "#000" }, { d: "M1 6h10v3H1z", f: "#000" }, { d: "M4 5.500l3-3 4-2h3v5l-4 2H7z", f: "#eee", s: "#333" }, { d: "M14 0h2v5h-2z", f: NAVY }],
  calendar: [{ d: "M.5 1.500h13v13h-13z", f: "#fff", s: "#000" }, { d: "M1 2h12v3H1z", f: "#00b020" }, { d: "M3.500 7v3M5.500 7v2", s: "#e00000" }, { d: "M6 10.500a4.500 4.500 0 1 0 9 0a4.500 4.500 0 1 0-9 0M10.500 8v3h2", f: "#fff", s: "#222" }],
  clock: [{ d: "M1 5a4 4 0 1 0 8 0a4 4 0 1 0-8 0M5 2.500v3h2", f: "#fff", s: "#333" }, { d: "M5.500 10v6M8.500 9v6M11.500 4v9M14.500 3v7", s: NAVY }],
  chart: [{ d: "M0 0h16v16H0z", f: "#000" }, { d: "M0 15.500h15.500V0", s: "#e00000" }, { d: "M3.500 3v5M5.500 6v5M8.500 7v5M10.500 4v6M12.500 2v8", s: "#00e000" }],
  bars: [{ d: "M5 3v10m-3 0h3M10 2v9M5 4h3M10 3h3M13 3v6", s: NAVY, w: 2 }, { d: "M1 15.500h14.500V2", s: "#bbb" }],
  candles: [{ d: "M5 2v12M11 1v12", s: NAVY }, { d: "M3 4h4v7H3z", f: NAVY }, { d: "M9.500 3.500h3v7h-3z", f: "#fff", s: NAVY }, { d: "M1 15.500h14.500V2", s: "#bbb" }],
  narrow: [{ d: "M7 1v12M10 5v9", s: "#2020d0" }, { d: "M0 8.500h5m-2-2l2 2-2 2M16 8.500h-4m2-2l-2 2 2 2" }],
  widen: [{ d: "M1 2v9M15 5v9", s: "#2020d0" }, { d: "M3 8.500h4M5 6L3 8.500l2 2M13 8.500H9m2-2l2 2-2 2" }],
  zoomIn: [{ d: "M10 10l5 5", s: NAVY, w: 3 }, { d: "M1 6a5 5 0 1 0 10 0a5 5 0 1 0-10 0", f: "#b8ffff", s: "#000" }, { d: "M3 6h6M6 3v6", w: 2 }],
  zoomOut: [{ d: "M10 10l5 5", s: GREY, w: 3 }, { d: "M1 6a5 5 0 1 0 10 0a5 5 0 1 0-10 0M3.500 6.500h5", s: GREY }],
  pointer: [{ d: "M4.500 .5v12l3-3 2 6 2-1-2-5h4z", f: "#fff", s: "#000" }],
  textTool: [{ d: "M0 1h12v12H0z", f: "#000" }, { d: "M0 0h14v2H0z", f: "#1010ff" }, { d: "M1 8l2-2 2 3 2-3 2 2", s: "#00e000" }, { d: "M8 8h8M12 8v8", s: "#fff", w: 4 }, { d: "M8 8h8M12 8v8", w: 2 }],
  hammer: [{ d: "M2 14l10-12M13 14L6 5", s: OLIVE, w: 2 }, { d: "M1 5l4-3 3 3-2 2zM11 2h4M12 12l3 3", w: 2 }],
  addSheet: [{ d: "M6.500 1.500h9v9h-9z", f: "#ffffcc", s: "#000" }, { d: "M8 4.500h2m2 0h2M8 7.500h2m2 0h2" }, { d: "M0 3h6M3 0v6", s: "#1010ff", w: 2 }, { d: "M1.500 10.500h9v4h-9zM4.500 8v2M13.500 12v3h-9", s: NAVY }],
  bubble: [{ d: "M2.500 .5h11v10h-2l-2 5-1-5h-6zM4 3.500h8M4 5.500h8M4 8.500h8M6.500 1v10M10.500 1v10", s: GREY }],
  fork: [{ d: "M0 15.500L5 10M3 8l7-7M5 10l10-9M7 12l8-7M4 8l4 4" }],
  vlines: [{ d: "M.5 0v16M3.500 0v16M6.500 0v16M10.500 0v16M15.500 0v16" }],
  hlines: [{ d: "M0 .5h16M0 5.500h16M0 10.500h16M0 15.500h16" }],
  timeRet: [{ d: "M0 .5h16M2 3.500h13" }, { d: "M4.500 6.500h10v9h-10z", f: "#fff", s: "#1010c0" }, { d: "M6 8.500h2m2 0h3M6 11.500h2m2 0h3M6 13.500h2m2 0h3", s: NAVY }],
  arcs: [{ d: "M1 14a9 9 0 0 1 9-9M4 14a6 6 0 0 1 8-5M7 14a3 3 0 0 1 6 0M3 14L15 3" }],
  fan: [{ d: "M1 15l2-2m1-1l2-2m1-1l2-2m1-1l2-2m1-1l2-2M1 15.500h15M5 8l1-1m2-2l1-1m2-2l1-1M5 13h2m2-2h2m2-2h2" }],
  retrace: [{ d: "M0 14l4-3 3 4M6.500 14V0M7 1.500h8M7 4.500h8M7 7.500h8M7 10.500h8" }],
  zones: [{ d: "M0 2l4 6 3-6M6.500 2v12M9.500 2v14M12.500 2v14M15.500 0v16" }],
  gann: [{ d: "M1 15L13 0M1 15L15 6M3 15l12-5M1 15.500h15" }],
  hspan: [{ d: "M1 8.500h14M4 5.500L1 8.500l3 3M12 5.500l3 3-3 3" }],
  channel: [{ d: "M0 13L10 2M3 15L13 3M7 15l8-9" }],
  arch: [{ d: "M1.500 15V7a6.500 6.500 0 0 1 13 0v8M4 15v-3l2-2 2 3 2-3 2 2v3M0 15.500h4m8 0h4" }],
  pencil: [{ d: "M5 11L11 .5l3 2-6 10-4 2z", f: "#ffe000", s: "#000" }, { d: "M0 14.500h7l2-1", w: 2 }],
  arc: [{ d: "M15 1c0 7-5 12-12 13" }],
  down: [{ d: "M7 2h3v7h3l-4 5-5-5h3z", f: "#ff0000" }],
  up: [{ d: "M7 14h3V7h3L9 2 4 7h3z", f: "#0000ff" }],
  circle: [{ d: "M1 8a7 7 0 1 0 14 0a7 7 0 1 0-14 0" }],
  rect: [{ d: "M1.500 1.500h13v13h-13z" }],
};

const GROUPS: string[][] = [
  ["new", "open", "saveAll", "mail", "folderUp"],
  ["window", "print"],
  ["list", "listColor", "lock", "net", "cubes"],
];
const CHART_GROUPS: string[][] = [
  ["money", "greyTable", "table"],
  ["waves", "arrows", "stack"],
  ["hand", "handPage"],
  ["calendar", "clock", "chart", "bars", "candles"],
  ["narrow", "widen"],
  ["zoomIn", "zoomOut"],
  ["pointer", "textTool"],
  ["hammer"],
  ["addSheet"],
  ["bubble"],
];
const DRAW_TOOLS = ["fork", "vlines", "hlines", "timeRet", "arcs", "fan", "retrace", "zones", "gann", "hspan", "channel", "arch", "pencil"];
const SHAPE_TOOLS = ["arc", "down", "up", "circle", "rect"];

const Tool = ({ name }: { name: string }) => (
  <ToolButton type="button" aria-label={name} $pressed={name === "pointer"}>
    <Glyph parts={ICONS[name]} />
  </ToolButton>
);

const ToolGroups = ({ groups }: { groups: string[][] }) => (
  <>
    {groups.map((g, i) => (
      <React.Fragment key={i}>
        {i > 0 && <Separator />}
        {g.map((n) => <Tool key={n} name={n} />)}
      </React.Fragment>
    ))}
  </>
);

const Triangle = ({ dir, bar, color = "#000" }: { dir: "left" | "right" | "down"; bar?: boolean; color?: string }) => (
  <svg width="10" height="10" viewBox="0 0 10 10" aria-hidden="true">
    <path d={dir === "left" ? "M7 0v10L2 5z" : dir === "right" ? "M3 0v10l5-5z" : "M0 3h10L5 8z"} fill={color} />
    {bar && <path d={dir === "left" ? "M1 1v8" : "M9 1v8"} stroke={color} />}
  </svg>
);

/* ------------------------------------------------------------------ */
/* Chart parts                                                         */
/* ------------------------------------------------------------------ */

type Entry = [string, string, number];
const W = "#ffffff";
const TEAL = "#008080";
const RED = "#ff0000";
const BLUE = "#0000ff";
const VIOLET = "#6666ff";
const CYAN = "#00ffff";
const DIM_OLIVE = "#6b6b00";

const LEGEND_PRICE: Entry[] = [
  ["GS:STOXX50-DT - 4 min", VIOLET, 18], ["EUREX", VIOLET, 11], ["06/16/2022", W, 11], ["L=3468.000", "#00ff00", 11],
  ["Hi=3505.000", W, 11], ["Lo=3442.000", W, 11], ["C=3468.000", "#00ff00", 11], ["Close", W, 20], ["3468.000", CYAN, 11],
  ["HILOW Alert", W, 20], ["3517.111", RED, 11], ["Strategy", W, 20], ["Leo Velo Chart", W, 20], ["-0.1318", TEAL, 11],
  ["-0.0748", RED, 11], ["-0.0480", BLUE, 11], ["0.0000", TEAL, 0],
];
const LEGEND_MACD: Entry[] = [
  ["Macd ciclico 2", W, 50], ["0.00", "#660066", 11], ["Leo Chart", W, 20], ["-7.09", CYAN, 11], ["8.00", RED, 11],
  ["-8.00", RED, 11], ["4.00", DIM_OLIVE, 11], ["-4.00", DIM_OLIVE, 11], ["0.00", BLUE, 0],
];
const LEGEND_CCI: Entry[] = [
  ["CCI Smothing ekam", W, 20], ["-206.96", CYAN, 11], ["120.00", "#808080", 11], ["-120.00", "#808080", 11], ["-206.96", "#404040", 11],
  ["Leo Velo Chart", W, 20], ["0.29", TEAL, 11], ["-0.21", RED, 11], ["-0.21", BLUE, 11], ["0.00", TEAL, 11],
  ["Stoc colore", W, 38], ["-1.00", "#cc6600", 0],
];

const LegendRow = ({ items }: { items: Entry[] }) => (
  <Legend>
    {items.map(([text, color, gap], i) => (
      <LegendItem key={i} $color={color} $gap={gap}>{text}</LegendItem>
    ))}
  </Legend>
);

const Sessions = ({ from, to }: { from: number; to: number }) => (
  <path d={SESSIONS.map((x) => `M${x}.5 ${from}V${to}`).join("")} stroke="#5a5a5a" strokeDasharray="9 3 3 3" />
);

const Signal = ({ x, y, up, label, labelY }: { x: number; y: number; up?: boolean; label: string; labelY: number }) => (
  <g>
    {up ? (
      <path d={`M${x} ${y}l-4 6h2.500v7h3v-7H${x + 4}z`} fill="#00ff00" />
    ) : (
      <path d={`M${x} ${y + 16}l-5-6h3.500V${y}h3v10h3.500z`} fill={RED} />
    )}
    <text x={x} y={labelY} fill={W} textAnchor="middle">{label}</text>
  </g>
);

const PricePlot = () => (
  <Plot $height={449} role="img" aria-label="Price chart">
    <g transform="translate(-81 -109)" fill="none" shapeRendering="crispEdges">
      <Sessions from={109} to={555} />
      <path d={`M${PLOT_LEFT} 375.500H${LAST_X}`} stroke={TEAL} />
      <path d={`M${PLOT_LEFT} 502.500H1838`} stroke={OLIVE} strokeDasharray="3 3" />
      <path d={line(VELO)} stroke={TEAL} />
      <path d={line(VELO_FAST)} stroke={RED} strokeDasharray="3 4" />
      <path d={line(VELO_SLOW)} stroke={BLUE} />
      <path d={line(priceDots)} stroke={VIOLET} />
      <path d={blocks(HIGH_STOPS)} fill={RED} />
      <path d={blocks(LOW_STOPS)} fill="#00ff00" />
      <path d={priceDots.map(([x, y]) => `M${x - 1} ${Math.round(y) - 2}h3v4h-3z`).join("")} fill={CYAN} />
      <path d="M277 251l4 4-4 4zM825 381l4 4-4 4zM1053 305l4 4-4 4z" fill="#00ff00" />
      <path d="M594 340l4 4-4 4zM973 458l4 4-4 4zM1565 278l4 4-4 4z" fill={RED} />
    </g>
    <g transform="translate(-81 -109)">
      <Signal up x={283} y={278} label="1" labelY={308} />
      <Signal x={599} y={308} label="-1" labelY={298} />
      <Signal up x={831} y={390} label="1" labelY={420} />
      <Signal x={979} y={425} label="-1" labelY={415} />
      <Signal up x={1059} y={363} label="1" labelY={393} />
      <Signal x={1571} y={249} label="-1" labelY={239} />
      <text x="1839" y="497" textAnchor="end" fill={OLIVE} fontSize="20">3450.000</text>
    </g>
  </Plot>
);

const MacdPlot = () => (
  <Plot $height={197} role="img" aria-label="Macd ciclico">
    <g transform="translate(-81 -577)" fill="none" shapeRendering="crispEdges">
      <Sessions from={578} to={771} />
      <path d={CYCLES.map((x) => `M${x}.5 582V768`).join("")} stroke={TEAL} strokeDasharray="18 6" />
      <path d={`M${PLOT_LEFT} 577.500H${LAST_X}M${PLOT_LEFT} 750.500H${LAST_X}`} stroke={RED} />
      <path d={`M${PLOT_LEFT} 620.500H${LAST_X}M${PLOT_LEFT} 706.500H${LAST_X}`} stroke={DIM_OLIVE} />
      <path d={`M${PLOT_LEFT} 705.500H${LAST_X}`} stroke="#990099" />
      <path d={`M${PLOT_LEFT} 663.500H${LAST_X}`} stroke={BLUE} strokeDasharray="3 3" />
      <path d={line(CYCLE_BASE)} stroke={TEAL} />
      <path d={line(CYCLE_LEAD)} stroke="#ffff00" strokeDasharray="3 4" />
      <path d={line(CYCLE_MAIN)} stroke="#ffff00" />
      <path d={line(MACD)} stroke={CYAN} />
      <path d={line(read(L3, "711,178 1203,667"))} stroke="#e020e0" />
    </g>
  </Plot>
);

const CciPlot = () => (
  <Plot $height={197} role="img" aria-label="CCI Smothing">
    <g transform="translate(-81 -793)" fill="none" shapeRendering="crispEdges">
      <Sessions from={793} to={989} />
      <path d={CCI_BARS.map(([x, y]) => `M${x}.5 882V${y.toFixed(0)}`).join("")} stroke="#484848" />
      <path d={`M${PLOT_LEFT} 821.500H${LAST_X}M${PLOT_LEFT} 943.500H${LAST_X}`} stroke="#808080" />
      <path d={`M${PLOT_LEFT} 888.500H${LAST_X}`} stroke={TEAL} />
      <path d={line(STOC)} stroke="#cc6600" strokeDasharray="3 3" />
      <path d={line(OSC)} stroke={TEAL} />
      <path d={line(OSC_FAST)} stroke={RED} strokeDasharray="4 4" />
      <path d={line(OSC_SLOW)} stroke={BLUE} />
      <path d={cciPath((y) => y > 821 && y < 944)} stroke="#b0b0b0" />
      <path d={cciPath((y) => y <= 821)} stroke={RED} />
      <path d={cciPath((y) => y >= 944)} stroke={CYAN} />
    </g>
    <g transform="translate(-81 -793)">
      {STOC_MARKS.map((m, i) => <circle key={i} cx={m.at[0]} cy={m.at[1]} r={4} fill={m.color} />)}
    </g>
  </Plot>
);

const PRICE_TICKS = [3530, 3520, 3510, 3500, 3490, 3480, 3470, 3460, 3450];
const tickY = (p: number) => priceY(p) - 1;
const MINOR_TICKS = [546, 599, 642, 685, 728, 831, 882, 933];
const MACD_TICKS: [string, number][] = [["4.00", 620], ["0.00", 663], ["-4.00", 706], ["-8.00", 750]];
const CCI_TICKS: [string, number][] = [["150.00", 806], ["50.00", 857], ["-50.00", 908], ["-150.00", 958]];

const LeftAxis = () => (
  <AxisColumn role="img" aria-label="Left scale">
    <g transform="translate(-2 -90)" fill={W}>
      <path
        shapeRendering="crispEdges"
        stroke={W}
        d={"M80.500 90V990M2 558.500H81M2 774.500H81" +
          [...PRICE_TICKS.map(tickY), ...MINOR_TICKS, ...MACD_TICKS.map((t) => t[1]), ...CCI_TICKS.map((t) => t[1])]
            .map((y) => `M73 ${y}.5h7`).join("")}
      />
      {PRICE_TICKS.map((p) => <text key={p} x="70" y={tickY(p) + 7} textAnchor="end">{p}</text>)}
      {MACD_TICKS.map(([t, y]) => <text key={t} x="70" y={y + 7} textAnchor="end">{t}</text>)}
      {CCI_TICKS.map(([t, y]) => <text key={t} x="70" y={y + 7} textAnchor="end">{t === "-150.00" ? "-150...." : t}</text>)}
    </g>
  </AxisColumn>
);

const BADGES: { y: number; text: string; color: string }[] = [
  { y: 190, text: "3517", color: RED },
  { y: 411, text: "3468", color: VIOLET },
  { y: 568, text: "8.00", color: RED },
  { y: 611, text: "4.00", color: DIM_OLIVE },
  { y: 654, text: "0.00", color: BLUE },
  { y: 697, text: "-4.00", color: DIM_OLIVE },
  { y: 741, text: "-8.00", color: RED },
  { y: 731, text: "-7.09", color: CYAN },
  { y: 812, text: "120.00", color: "#808080" },
  { y: 934, text: "-120.00", color: "#808080" },
  { y: 978, text: "-206.96", color: CYAN },
];

const RightAxis = () => (
  <AxisColumn role="img" aria-label="Right scale">
    <g transform="translate(-1840 -90)" fill={W}>
      <path
        shapeRendering="crispEdges"
        stroke={W}
        d={"M1840.500 90V990M1840 558.500H1918M1840 774.500H1918" +
          [...PRICE_TICKS.map(tickY), ...MINOR_TICKS, ...CCI_TICKS.map((t) => t[1])]
            .map((y) => `M1841 ${y}.5h6`).join("")}
      />
      {PRICE_TICKS.map((p) => <text key={p} x="1848" y={tickY(p) + 7}>{p}</text>)}
      {CCI_TICKS.map(([t, y]) => <text key={t} x="1848" y={y + 7}>{t}</text>)}
      {BADGES.map((b) => (
        <g key={b.text}>
          <rect x="1841" y={b.y} width="77" height="23" fill={b.color} />
          <text x="1849" y={b.y + 19} fill="#000">{b.text}</text>
        </g>
      ))}
    </g>
  </AxisColumn>
);

const TIMES: [number, string][] = [
  [114, "11:52"], [182, "13:00"], [250, "14:08"], [318, "15:16"], [386, "16:24"], [454, ""], [522, ""], [590, "10:48"],
  [658, "11:56"], [726, "13:04"], [794, "14:12"], [862, "15:20"], [930, "16:28"], [998, ""], [1066, ""], [1134, "10:52"],
  [1202, "12:00"], [1270, "13:08"], [1338, "14:16"], [1406, "15:24"], [1474, "16:32"], [1542, ""], [1610, ""],
  [1678, "10:56"], [1746, "12:04"], [1814, ""],
];
const DAYS: [number, string][] = [[486, "6/14"], [1026, "6/15"], [1566, "6/16"]];

const TimeScale = () => (
  <TimeAxis role="img" aria-label="Time scale">
    <g transform="translate(-81 -990)" fill={W}>
      <path
        shapeRendering="crispEdges"
        stroke={W}
        d={"M80 990.500H1841" + TIMES.map(([x]) => `M${x}.5 990v5`).join("") + DAYS.map(([x]) => `M${x}.5 990v11`).join("")}
      />
      {TIMES.filter((t) => t[1]).map(([x, t]) => <text key={x} x={x + 2} y="1014">{t}</text>)}
      {DAYS.map(([x, t]) => <text key={x} x={x + 7} y="1014">{t}</text>)}
    </g>
  </TimeAxis>
);

/* ------------------------------------------------------------------ */
/* Page                                                                */
/* ------------------------------------------------------------------ */

const TABS: [string, number][] = [
  ["STOX_TF60", 76], ["STOX_TF120", 83], ["STOX TF240", 81], ["STOX _100", 74], ["STOX_TF30", 78], ["FIB_TF60", 66],
  ["FIB_TF120", 71], ["FIB TF240", 69], ["FIB_100", 56], ["FIB_TF30", 67], ["FIB Frame bassi", 103], ["FIB Giornaliero", 93],
  ["STOXX frame bassi", 120], ["STOXX giornaliero", 113], ["No PREZZI", 73], ["ANNUALE Indici", 100],
];

const Slant = ({ first, last }: { first?: boolean; last?: boolean }) => (
  <svg width="10" height="17" viewBox="0 0 10 17" aria-hidden="true">
    {!last && <path d="M2 0l6 16.500h2" stroke="#000" fill="none" />}
    {last ? <path d="M0 16.500h2L8 0" stroke="#000" fill="none" /> : !first && <path d="M0 16.500h2l2-8" stroke="#000" fill="none" />}
  </svg>
);

const STATUS: [string, number, string?][] = [
  ["Open Psns:", 91], ["DT BP:", 62], ["Purch Pwr:", 88], ["Closed P/L:", 93], ["RT TE:", 59], ["Open P/L:", 84],
  ["ORDER BAR", 89, "#1d8a1d"], ["MACROS", 68, "#1d8a1d"],
];

export default function App() {
  return (
    <Shell>
      <Global />
      <TitleBar>
        <TitleText>
          <svg width="18" height="24" viewBox="0 0 18 24" aria-hidden="true">
            <path d="M2 10C2 4 9 1 15 6l2 3-4-1c2 3 2 8 0 13l-4 2c3-6 2-11-1-13-1 3-2 6-4 12L1 18z" fill="#1554c8" />
            <path d="M4 10c1-4 5-5 8-3-3 0-5 2-6 6l-3 5z" fill="#7db4f4" />
          </svg>
          <span>{"TradeStation 8.1 - STOX_FIB - STOXX giornaliero - [Chart Analysis - GS:STOXX50-DT  4 min  [EUREX] STOXX FUTURES]"}</span>
        </TitleText>
        <WindowButtons>
          <WindowButton type="button" aria-label="Minimize">
            <svg width="18" height="16"><path d="M1 9.500h16v4H1z" fill="#fff" stroke="#555" /></svg>
          </WindowButton>
          <WindowButton type="button" aria-label="Restore">
            <svg width="20" height="18"><path d="M7 2.500h10.500V12M3.500 5.500h10v10h-10z" fill="none" stroke="#fff" strokeWidth="3" /><path d="M6 9h5v4H6z" fill="#444" /></svg>
          </WindowButton>
          <WindowButton type="button" aria-label="Close" $wide>
            <svg width="18" height="16"><path d="M3 2l12 12M15 2L3 14" stroke="#fff" strokeWidth="4" /></svg>
          </WindowButton>
        </WindowButtons>
      </TitleBar>

      <MenuBar>
        <svg width="19" height="17" viewBox="0 0 19 17" aria-hidden="true">
          <path d="M0 0h19v17H0z" fill="#000" />
          <path d="M0 0h19v2H0z" fill="#0000d0" />
          <path d="M2 10l3-4 2 4 3-5 2 3 3-5" stroke="#00c000" fill="none" />
          <path d="M1 15.500h16V3" stroke="#a00000" fill="none" strokeDasharray="2 1" />
        </svg>
        {["File", "Edit", "View", "Insert", "Format", "Drawing", "Window", "Help"].map((m) => (
          <MenuItem key={m} type="button">{m}</MenuItem>
        ))}
        <ChildButtons>
          <ChildButton type="button" aria-label="Minimize chart"><svg width="12" height="12"><path d="M3 9h6" stroke="#7a8794" strokeWidth="2" /></svg></ChildButton>
          <ChildButton type="button" aria-label="Restore chart"><svg width="12" height="12"><path d="M4.500 4V2h5.500v5H8M2.500 5.500h5v5h-5zM4 2h6" stroke="#7a8794" fill="none" /></svg></ChildButton>
          <ChildButton type="button" aria-label="Close chart"><svg width="12" height="12"><path d="M3 3l6 7M9 3l-6 7" stroke="#7a8794" strokeWidth="2" /></svg></ChildButton>
        </ChildButtons>
      </MenuBar>

      <Toolbar>
        <Grip />
        <ToolGroups groups={GROUPS} />
        <Separator />
        <ComboBox>
          <ComboInput aria-label="Symbol" />
          <Triangle dir="down" />
        </ComboBox>
        <Narrow type="button" aria-label="Go"><Triangle dir="right" /></Narrow>
        <Space />
        <Tool name="search" />
        <Grip $lead={15} />
        <ToolGroups groups={CHART_GROUPS} />
        <Grip $lead={26} />
        {DRAW_TOOLS.map((n) => <Tool key={n} name={n} />)}
        <Separator />
        {SHAPE_TOOLS.map((n) => <Tool key={n} name={n} />)}
        <ToolButton type="button">abc</ToolButton>
      </Toolbar>

      <ChartFrame>
        <LeftAxis />
        <Panes>
          <LegendRow items={LEGEND_PRICE} />
          <PricePlot />
          <LegendRow items={LEGEND_MACD} />
          <MacdPlot />
          <LegendRow items={LEGEND_CCI} />
          <CciPlot />
          <TimeScale />
        </Panes>
        <RightAxis />
      </ChartFrame>

      <ScrollBar>
        <ScrollButton type="button" aria-label="Scroll left"><Triangle dir="left" color="#333" /></ScrollButton>
        <ScrollEnd>
          <Thumb />
          <ScrollButton type="button" aria-label="Scroll right"><Triangle dir="right" color="#333" /></ScrollButton>
        </ScrollEnd>
      </ScrollBar>

      <TabStrip>
        <TabNav type="button" aria-label="First"><Triangle dir="left" bar color="#777" /></TabNav>
        <TabNav type="button" aria-label="Previous"><Triangle dir="left" color="#777" /></TabNav>
        <TabNav type="button" aria-label="Next"><Triangle dir="right" color="#777" /></TabNav>
        <TabNav type="button" aria-label="Last"><Triangle dir="right" bar color="#777" /></TabNav>
        {TABS.map(([name, width], i) => (
          <React.Fragment key={name}>
            <Slant first={i === 0} />
            <Tab type="button" $width={width} $active={name === "STOXX giornaliero"}>{name}</Tab>
          </React.Fragment>
        ))}
        <Slant last />
      </TabStrip>

      <StatusBar>
        <HelpText>For Help, press F1</HelpText>
        <StatusCell $width={52}>Acct:</StatusCell>
        {STATUS.map(([text, width, color]) => (
          <StatusCell key={text} $width={width} $color={color}>{text}</StatusCell>
        ))}
        <StatusCell $width={19}>
          <svg width="11" height="13" viewBox="0 0 11 13" aria-hidden="true">
            <circle cx="6" cy="7" r="5" fill="#400" />
            <circle cx="5" cy="6" r="5" fill="#e00000" />
            <circle cx="4" cy="4" r="1.500" fill="#ffb0b0" />
          </svg>
        </StatusCell>
        <StatusCell $width={123}>16/06/2022 10:08</StatusCell>
      </StatusBar>
    </Shell>
  );
}
